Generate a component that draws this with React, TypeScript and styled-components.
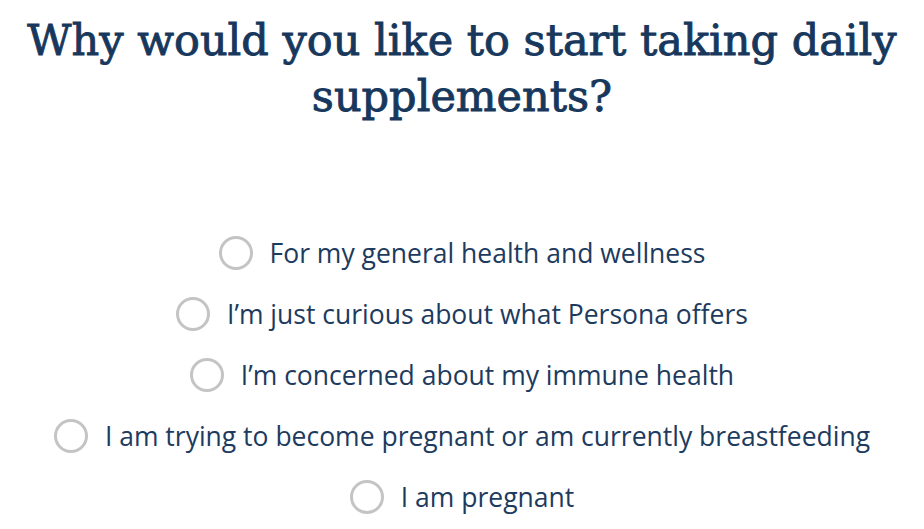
import React from "react";
import styled, { createGlobalStyle } from "styled-components";

const Global = createGlobalStyle`
  html, body { margin: 0; padding: 0; background: #ffffff; }
`;

const Page = styled.main`
  width: 924px;
  min-height: 529px;
  display: flex;
  flex-direction: column;
  align-items: center;
  padding-top: 12px;
  box-sizing: border-box;
`;

const Title = styled.h1`
  margin: 0;
  font-family: "DejaVu Serif", serif;
  font-weight: 400;
  font-size: 43px;
  line-height: 56px;
  color: #17375c;
  text-align: center;
  -webkit-text-stroke: 0.9px #17375c;
`;

const Options = styled.div`
  margin-top: 112px;
  display: flex;
  flex-direction: column;
  align-items: center;
  gap: 27px;
`;

const Option = styled.label`
  display: flex;
  align-items: center;
  gap: 17px;
  cursor: pointer;
  font-family: "Open Sans", sans-serif;
  font-size: 26.5px;
  line-height: 34px;
  color: #1d3b5e;
`;

const Radio = styled.span`
  width: 34px;
  height: 34px;
  box-sizing: border-box;
  border: 3px solid #c4c4c4;
  border-radius: 50%;
  flex-shrink: 0;
`;

const options = [
  "For my general health and wellness",
  "I’m just curious about what Persona offers",
  "I’m concerned about my immune health",
  "I am trying to become pregnant or am currently breastfeeding",
  "I am pregnant",
];

export default function App() {
  return (
    <>
      <Global />
      <Page>
        <Title>
          Why would you like to start taking daily
          <br />
          supplements?
        </Title>
        <Options>
          {options.map((o) => (
            <Option key={o}>
              <Radio />
              {o}
            </Option>
          ))}
        </Options>
      </Page>
    </>
  );
}
